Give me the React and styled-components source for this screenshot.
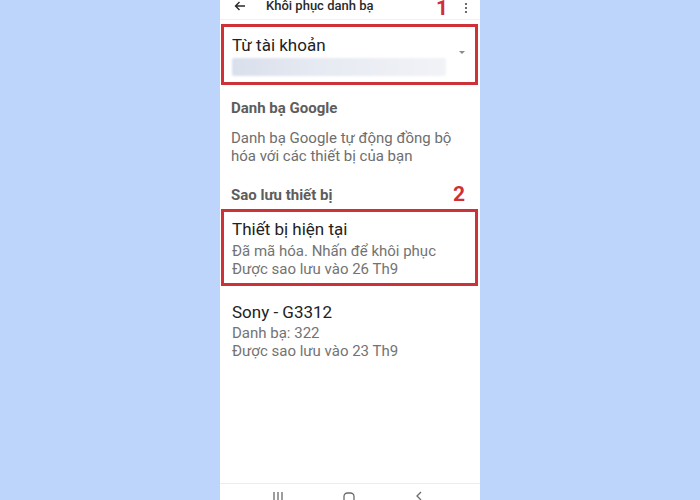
import React from 'react';
import styled, { createGlobalStyle } from 'styled-components';

const GlobalStyle = createGlobalStyle`
  html, body {
    margin: 0;
    padding: 0;
    background: #bed5fb;
    font-family: Roboto, "Noto Sans", "Liberation Sans", sans-serif;
  }
`;

const Screen = styled.div`
  width: 260px;
  height: 500px;
  margin: 0 auto;
  background: #ffffff;
  display: flex;
  flex-direction: column;
  overflow: hidden;
  position: relative;
`;

const Header = styled.div`
  display: flex;
  align-items: center;
  height: 27px;
  margin-top: -8px;
  padding: 0 13px 0 14px;
  border-bottom: 1px solid #f1f1f1;
  color: #2a2a2a;
`;

const BackIcon = styled.svg`
  width: 12px;
  height: 12px;
  flex: none;
`;

const HeaderTitle = styled.div`
  margin-left: 20px;
  font-size: 13px;
  font-weight: 500;
  flex: 1;
`;

const Dots = styled.div`
  display: flex;
  flex-direction: column;
  gap: 2px;
  padding-top: 4px;

  span {
    width: 2px;
    height: 2px;
    border-radius: 50%;
    background: #3a3a3a;
  }
`;

const Marker = styled.span`
  position: absolute;
  top: ${(p) => p.$top}px;
  left: ${(p) => p.$left}px;
  font-size: 21px;
  font-weight: 700;
  line-height: 1;
  color: #cf2f38;
`;

const Highlight = styled.div`
  margin: ${(p) => p.$mt}px 2px 0 1px;
  border: 3px solid ${(p) => (p.$on ? '#cf3139' : 'transparent')};
  padding: ${(p) => p.$pad};
  position: relative;
`;

const AccountLabel = styled.div`
  font-size: 17px;
  line-height: 22px;
  color: #222222;
`;

const BlurBar = styled.div`
  margin-top: 2px;
  width: 214px;
  height: 18px;
  border-radius: 2px;
  background: linear-gradient(to right, #d9dfec 0%, #e6eaf2 40%, #f2f3f7 100%);
  filter: blur(1px);
`;

const Caret = styled.span`
  position: absolute;
  right: 10px;
  top: 24px;
  width: 0;
  height: 0;
  border-left: 3px solid transparent;
  border-right: 3px solid transparent;
  border-top: 3px solid #8a8a8a;
`;

const SectionTitle = styled.div`
  margin-top: ${(p) => p.$mt}px;
  padding-left: 11px;
  font-size: 15px;
  line-height: 20px;
  font-weight: 700;
  color: #5d5d5d;
`;

const Description = styled.div`
  margin-top: 11px;
  padding: 0 11px;
  font-size: 15px;
  line-height: 18px;
  color: #6e6e6e;
`;

const ItemTitle = styled.div`
  font-size: 17px;
  line-height: 22px;
  color: #222222;
`;

const ItemLine = styled.div`
  font-size: 15px;
  line-height: 18px;
  color: #737373;
`;

const Lines = styled.div`
  margin-top: ${(p) => p.$gap}px;
`;

const Spacer = styled.div`
  flex: 1;
`;

const NavBar = styled.div`
  flex: none;
  height: 16px;
  border-top: 1px solid #ececec;
  display: flex;
  align-items: flex-end;
  justify-content: space-between;
  padding: 0 54px 0 51px;
`;

const NavIcon = styled.svg`
  width: 14px;
  height: 10px;
  display: block;
`;

export default function App() {
  return (
    <>
      <GlobalStyle />
      <Screen>
        <Header>
          <BackIcon viewBox="0 0 12 12">
            <path d="M11 6H1.5M5.5 2 1.5 6l4 4" fill="none" stroke="#2a2a2a" strokeWidth="1.4" />
          </BackIcon>
          <HeaderTitle>Khôi phục danh bạ</HeaderTitle>
          <Dots>
            <span />
            <span />
            <span />
          </Dots>
        </Header>
        <Marker $top={-2} $left={216}>1</Marker>

        <Highlight $on $mt={4} $pad="7px 8px 6px 8px">
          <AccountLabel>Từ tài khoản</AccountLabel>
          <BlurBar />
          <Caret />
        </Highlight>

        <SectionTitle $mt={13}>Danh bạ Google</SectionTitle>
        <Description>
          Danh bạ Google tự động đồng bộ
          <br />
          hóa với các thiết bị của bạn
        </Description>

        <SectionTitle $mt={20}>Sao lưu thiết bị</SectionTitle>
        <Marker $top={184} $left={233}>2</Marker>

        <Highlight $on $mt={4} $pad="6px 8px 5px 8px">
          <ItemTitle>Thiết bị hiện tại</ItemTitle>
          <Lines $gap={2}>
            <ItemLine>Đã mã hóa. Nhấn để khôi phục</ItemLine>
            <ItemLine>Được sao lưu vào 26 Th9</ItemLine>
          </Lines>
        </Highlight>

        <Highlight $mt={6} $pad="6px 8px 5px 8px">
          <ItemTitle>Sony - G3312</ItemTitle>
          <Lines $gap={1}>
            <ItemLine>Danh bạ: 322</ItemLine>
            <ItemLine>Được sao lưu vào 23 Th9</ItemLine>
          </Lines>
        </Highlight>

        <Spacer />

        <NavBar>
          <NavIcon viewBox="0 0 14 10">
            <path d="M3 2v8M7 2v8M11 2v8" stroke="#6a6a6a" strokeWidth="1.3" />
          </NavIcon>
          <NavIcon viewBox="0 0 14 10">
            <rect x="2" y="3" width="10" height="10" rx="3.5" fill="none" stroke="#6a6a6a" strokeWidth="1.3" />
          </NavIcon>
          <NavIcon viewBox="0 0 14 10">
            <path d="M9 2 5 6l4 4" fill="none" stroke="#6a6a6a" strokeWidth="1.3" />
          </NavIcon>
        </NavBar>
      </Screen>
    </>
  );
}
